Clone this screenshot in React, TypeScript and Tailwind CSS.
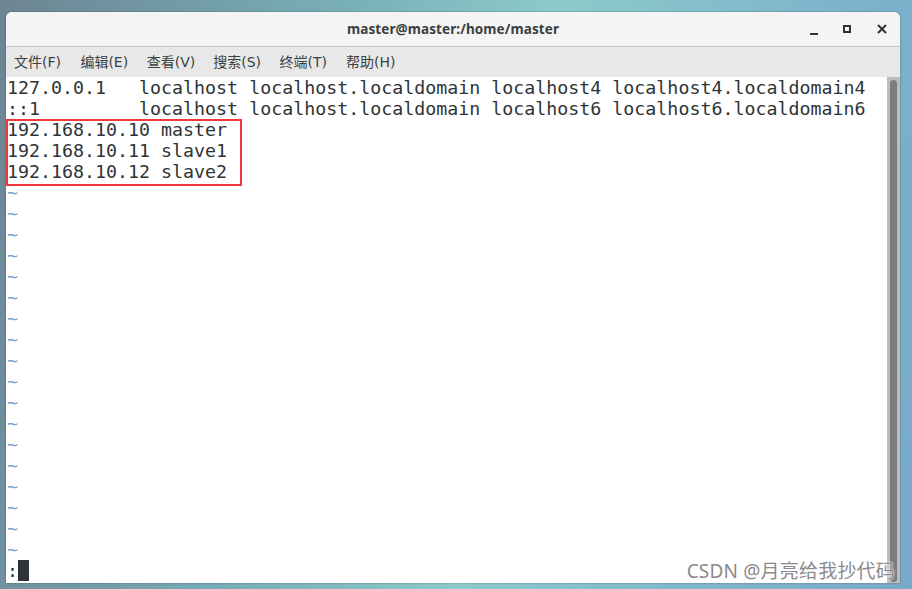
const hosts = [
  "127.0.0.1   localhost localhost.localdomain localhost4 localhost4.localdomain4",
  "::1         localhost localhost.localdomain localhost6 localhost6.localdomain6",
  "192.168.10.10 master",
  "192.168.10.11 slave1",
  "192.168.10.12 slave2",
];

const menus = ["文件(F)", "编辑(E)", "查看(V)", "搜索(S)", "终端(T)", "帮助(H)"];

export default function App() {
  const tildes = Array.from({ length: 18 });

  return (
    <div className="w-[912px] h-[589px] overflow-hidden bg-[linear-gradient(100deg,#6d8593_0%,#76aab4_30%,#8ccaca_55%,#7fb6cc_80%,#7aa9c9_100%)] pt-[12px] pl-[6px]">
      <div className="relative w-[894px] h-[571px] flex flex-col bg-white rounded-t-[6px] overflow-hidden shadow-[0_0_2px_rgba(0,0,0,0.4)]">
        {/* title bar */}
        <div className="relative h-[35px] shrink-0 bg-[#f4f4f4] border-b border-[#c4c4c4] flex items-center justify-center">
          <span className="text-[13.5px] font-bold text-[#3a3f41] font-['Noto_Sans',sans-serif] tracking-[0.1px]">
            master@master:/home/master
          </span>
          <div className="absolute right-0 top-0 h-full flex items-center">
            <div className="w-[33px] flex justify-center items-end h-[14px]">
              <div className="w-[8px] h-[2px] bg-[#2e3436] mb-[1px]" />
            </div>
            <div className="w-[34px] flex justify-center">
              <div className="w-[8px] h-[8px] border-2 border-[#2e3436]" />
            </div>
            <div className="w-[36px] flex justify-center">
              <svg width="10" height="10" viewBox="0 0 10 10">
                <path d="M1 1L9 9M9 1L1 9" stroke="#2e3436" strokeWidth="2" />
              </svg>
            </div>
          </div>
        </div>
        {/* menu bar */}
        <div className="h-[30px] shrink-0 bg-[#e8e8e8] flex items-center pl-[8px] gap-[12.4px] text-[14px] text-[#3a3f41] font-['DejaVu_Sans','Noto_Sans_CJK_SC',sans-serif]">
          {menus.map((m) => (
            <span key={m} className="w-[54px]">
              {m}
            </span>
          ))}
        </div>
        {/* terminal */}
        <div className="flex flex-1">
          <div className="relative flex-1 pl-[1px] font-['DejaVu_Sans_Mono',monospace] text-[18.3px] leading-[21px] text-[#2e3436]">
            {hosts.map((h, i) => (
              <div key={i} className="h-[21px] whitespace-pre">
                {h}
              </div>
            ))}
            {tildes.map((_, i) => (
              <div key={i} className="h-[21px] text-[#729fcf]">
                ~
              </div>
            ))}
            <div className="h-[21px] flex items-center">
              <span className="w-[11px]">:</span>
              <span className="w-[11px] h-[21px] bg-[#2e3436]" />
            </div>
            <div className="absolute left-0 top-[42px] w-[236px] h-[67px] border-2 border-[#f2383b]" />
            <div className="absolute right-[-8px] bottom-[1px] text-[19px] text-[#8a8a8a] font-['Noto_Sans','Noto_Sans_CJK_SC',sans-serif] [text-shadow:0_0_2px_#fff,0_0_2px_#fff] tracking-[0.2px]">
              CSDN @月亮给我抄代码
            </div>
          </div>
          <div className="w-[13px] shrink-0 bg-[#bcbcbc] flex justify-center pt-[3px] pb-[1px]">
            <div className="w-[7px] h-full rounded-full bg-[#7d7d7d]" />
          </div>
        </div>
      </div>
    </div>
  );
}
